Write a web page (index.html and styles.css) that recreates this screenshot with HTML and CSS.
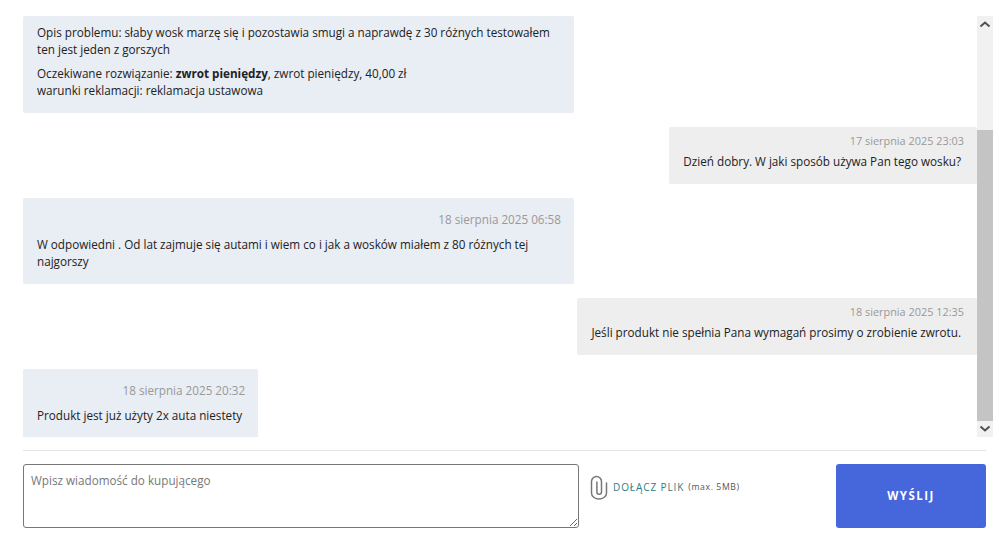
FILE: index.html
```html
<!DOCTYPE html>
<html lang="pl">
<head>
    <meta charset="UTF-8">
    <title>Wiadomości</title>
    <link rel="stylesheet" href="styles.css">
</head>
<body>

    <!-- Messages -->
    <div class="chat">
        <div class="messages">
            <div class="bubble buyer first">
                <p>Opis problemu: słaby wosk marzę się i pozostawia smugi a naprawdę z 30 różnych testowałem ten jest jeden z gorszych</p>
                <p>Oczekiwane rozwiązanie: <strong>zwrot pieniędzy</strong>, zwrot pieniędzy, 40,00 zł<br>warunki reklamacji: reklamacja ustawowa</p>
            </div>
            <div class="bubble seller">
                <div class="date">17 sierpnia 2025 23:03</div>
                <p>Dzień dobry. W jaki sposób używa Pan tego wosku?</p>
            </div>
            <div class="bubble buyer">
                <div class="date">18 sierpnia 2025 06:58</div>
                <p>W odpowiedni . Od lat zajmuje się autami i wiem co i jak a wosków miałem z 80 różnych tej najgorszy</p>
            </div>
            <div class="bubble seller">
                <div class="date">18 sierpnia 2025 12:35</div>
                <p>Jeśli produkt nie spełnia Pana wymagań prosimy o zrobienie zwrotu.</p>
            </div>
            <div class="bubble buyer">
                <div class="date">18 sierpnia 2025 20:32</div>
                <p>Produkt jest już użyty 2x auta niestety</p>
            </div>
        </div>
        <div class="scrollbar">
            <svg class="arrow" width="16" height="16" viewBox="0 0 16 16"><path d="M3.500 10.500l4.500-4 4.500 4" fill="none" stroke="#505050" stroke-width="2"/></svg>
            <div class="track"><div class="thumb"></div></div>
            <svg class="arrow" width="16" height="16" viewBox="0 0 16 16"><path d="M3.500 5.500l4.500 4 4.500-4" fill="none" stroke="#505050" stroke-width="2"/></svg>
        </div>
    </div>

    <!-- Reply form -->
    <div class="reply">
        <textarea class="reply-input" placeholder="Wpisz wiadomość do kupującego"></textarea>
        <div class="attach">
            <svg class="clip" width="18" height="25" viewBox="0 0 18 25"><path d="M16.500 8v10a7.500 6 0 0 1-15 0V6.500a5 5 0 0 1 10 0V17a2.300 2.300 0 0 1-4.600 0V7" fill="none" stroke="#777" stroke-width="1.500" stroke-linecap="round"/></svg>
            <span class="attach-link">DOŁĄCZ PLIK</span>
            <span class="attach-note">(max. 5MB)</span>
        </div>
        <button class="send">WYŚLIJ</button>
    </div>

</body>
</html>
```

FILE: styles.css
```css
body {
    font-family: "Open Sans", sans-serif;
    font-size: 11.7px;
    line-height: 17px;
    color: #222;
    margin: 0;
    padding: 16px 6px 0 23px;
    background-color: #fff;
}

p {
    margin: 0;
}

.chat {
    display: flex;
    height: 421px;
    overflow: hidden;
}

.messages {
    flex: 1;
    display: flex;
    flex-direction: column;
    gap: 14px;
}

.bubble {
    box-sizing: border-box;
    max-width: 551px;
    padding: 13px 16px 14px 14px;
    border-radius: 2px;
}

.bubble.buyer {
    align-self: flex-start;
    background-color: #e9edf4;
}

.bubble.seller {
    align-self: flex-end;
    padding-top: 5px;
    background-color: #eee;
}

.bubble.first {
    width: 551px;
    padding-top: 8px;
}

.bubble.first p + p {
    margin-top: 7px;
}

.date {
    color: #999;
    text-align: right;
    margin: 0 -3px 8px 0;
}

.seller .date {
    font-size: 10.900px;
    margin-bottom: 4px;
}

/* Scrollbar drawn by hand */
.scrollbar {
    width: 16px;
    display: flex;
    flex-direction: column;
    background-color: #f1f1f1;
}

.arrow {
    display: block;
    flex: none;
}

.track {
    flex: 1;
    display: flex;
    flex-direction: column;
    justify-content: flex-end;
}

.thumb {
    height: 291px;
    background-color: #c4c4c4;
}

/* Reply form */
.reply {
    display: flex;
    align-items: flex-start;
    width: 963px;
    margin-top: 13px;
    padding-top: 13px;
    border-top: 1px solid #e4e4e4;
}

.reply-input {
    box-sizing: border-box;
    width: 556px;
    height: 64px;
    padding: 7px;
    font-family: inherit;
    font-size: 11.7px;
    line-height: 17px;
    border: 1px solid #777;
    border-radius: 3px;
}

.reply-input::placeholder {
    color: #777;
}

.attach {
    display: flex;
    align-items: center;
    gap: 4px;
    margin-left: 11px;
    margin-top: 11px;
}

.clip {
    display: block;
    margin-right: 1px;
}

.attach-link {
    color: #2f7d83;
    font-size: 10px;
    letter-spacing: 0.9px;
}

.attach-note {
    color: #555;
    font-size: 8.700px;
    letter-spacing: 0.6px;
}

.send {
    width: 150px;
    height: 64px;
    margin-left: auto;
    padding: 0 0 2px;
    border: 0;
    border-radius: 3px;
    background-color: #4666db;
    color: #fff;
    font-family: inherit;
    font-size: 11.500px;
    font-weight: 700;
    letter-spacing: 1.500px;
    cursor: pointer;
}
```
